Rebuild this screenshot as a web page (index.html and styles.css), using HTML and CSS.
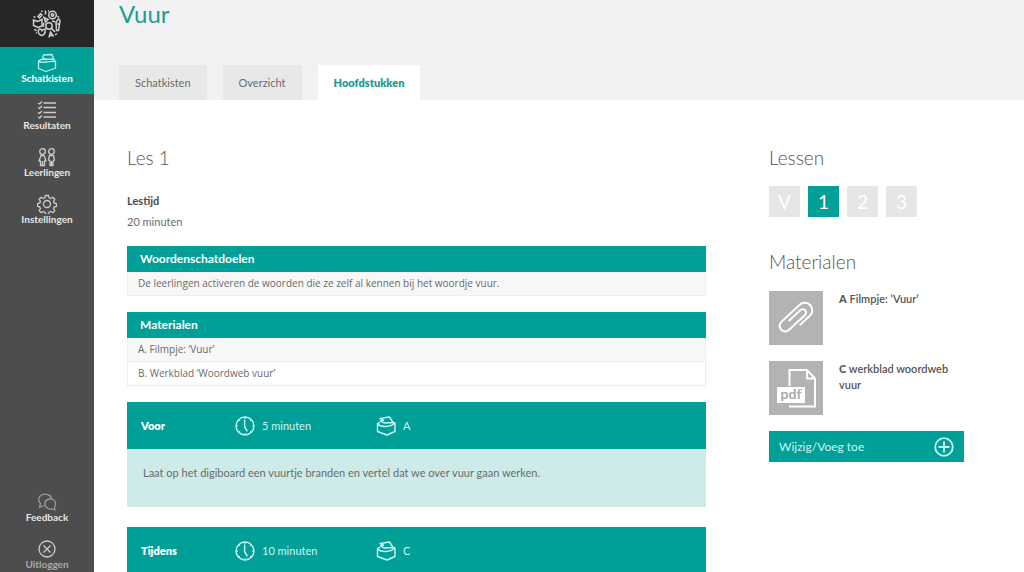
FILE: index.html
```html
<!DOCTYPE html>
<html lang="nl">
<head>
<meta charset="utf-8">
<meta name="viewport" content="width=device-width, initial-scale=1">
<title>Vuur - Hoofdstukken</title>
<link rel="stylesheet" href="styles.css">
</head>
<body>
<svg class="symbols" aria-hidden="true">
  <symbol id="chest" viewBox="0 0 20 20">
    <path d="M1 8 4 6.200M17 6.500 19 7V15.500L11 19 1.500 15.500V8C5 11.500 14 11.500 19 7M4 2.500 13.500 1 17 6.500 8 7 4.500 5 7.500 4.200Z"/>
  </symbol>
  <symbol id="clock" viewBox="0 0 20 20">
    <circle cx="10" cy="10" r="9"/>
    <path d="M9.600 3.600V10.600L12.400 15.400"/>
    <path class="ticks" d="M10 1v2M10 17v2M1 10h2M17 10h2M3.600 3.600 5 5M15 15l1.400 1.400M3.600 16.400 5 15M15 5l1.400-1.400"/>
  </symbol>
</svg>
<div class="app">
  <aside class="sidebar">
    <a class="logo" href="#" aria-label="Start">
      <svg viewBox="0 0 30 30">
        <path d="M1.500 11 5.500 12.500 10 10.500V17L6 18.500 1.500 16.500ZM6.500 21c1.500-2 3-.500 3.500.600 1-1.600 3.600-1.400 3.200 1 0 2-2 3.500-3.600 4-2-.8-4-3-3.100-5.600ZM25.500 11c.5-1.500 2.500-1 2.500 1l-1.500 9.500h-2L24 14Z"/>
        <circle cx="20.500" cy="6" r="3.800"/><circle cx="20.500" cy="6" r="1.200"/>
        <circle cx="17" cy="17" r="3.200"/>
        <path d="M19.400 19.400 23 23M6 7.500 8.500 4.500 10 6 7.500 9ZM13.500 1.500V5.500M12 8.500l4 2-2.500 2.500ZM17 28.500l1.500-5.500 3 4.500M17 26.500h4M12 14l-1 4M20 12l3.500 1M2.500 20l2 2M23 26l2-1.500M10.500 1.800l-1 1M25.500 7l1.500 1.500M13.500 19v1.500M1.500 8h2M25 15h3M16 2h1M4 24h1"/>
      </svg>
    </a>
    <nav class="menu" aria-label="Hoofdmenu">
      <a class="menu-item active" href="#"><svg class="icon" viewBox="0 0 20 20"><path d="M1.500 8 4 6.500 16.500 6 18.500 8.500V15L9 18.500 1.500 15.500ZM1.500 8C5 11.500 10 7.500 18.500 8.500M5.500 4.500 6.500 2 15 1.500 16.500 6M5.500 4.500 9 6.500"/></svg>Schatkisten</a>
      <a class="menu-item" href="#"><svg class="icon" viewBox="0 0 20 20"><path d="M6.500 3H19M6.500 7.500H19M6.500 12.500H19M6.500 17H19M1 3l1.500 1L5 1.500M1 7.500l1.500 1L5 6M1 12.500l1.500 1L5 11M1 17l1.500 1L5 15.500"/></svg>Resultaten</a>
      <a class="menu-item" href="#"><svg class="icon" viewBox="0 0 20 20"><circle cx="5.500" cy="4.500" r="2.800"/><circle cx="14.500" cy="4.500" r="2.800"/><path d="M4 8.500H7L9 14H7.500V18.500H3.500V14H2ZM5.500 14v4.500M12.500 8.500H16.500L17.500 13 16 14V18.500H13V14L11.500 13ZM14.500 14v4.500"/></svg>Leerlingen</a>
      <a class="menu-item" href="#"><svg class="icon" viewBox="0 0 20 20"><circle cx="10" cy="10" r="3.500"/><path d="M8.500 1.500h3l.6 2.400 1.600.6 2.100-1.200 2 2-1.200 2.100.6 1.600 2.300.6v2.800l-2.300.6-.6 1.600 1.200 2.100-2 2-2.100-1.200-1.600.6-.6 2.200h-3l-.6-2.200-1.600-.6-2.100 1.200-2-2 1.200-2.100-.6-1.600-2.300-.6V9.600L2.800 9l.6-1.600-1.200-2.100 2-2 2.100 1.200 1.600-.6Z"/></svg>Instellingen</a>
    </nav>
    <nav class="menu menu-bottom" aria-label="Account">
      <a class="menu-item soft" href="#"><svg class="icon" viewBox="0 0 20 20"><path d="M7 13.500 2.500 15.500 3.500 11.500C1 9 1 5 4.500 3 8.500.800 14 3 14.500 6.500M8 10.500C9 6.500 15.500 5.500 18 9.500c1 2 .5 4-.5 5.500l.5 3-3-1.200C11 18 7 14.500 8 10.500Z"/></svg>Feedback</a>
      <a class="menu-item dim" href="#"><svg class="icon" viewBox="0 0 20 20"><circle cx="10" cy="10" r="8"/><path d="M6.500 6.500 13.500 13.500M13.500 6.500 6.500 13.500"/></svg>Uitloggen</a>
    </nav>
  </aside>

  <div class="page">
    <header class="page-head">
      <h1>Vuur</h1>
      <nav class="tabs" aria-label="Onderdelen">
        <a class="tab" href="#">Schatkisten</a>
        <a class="tab" href="#">Overzicht</a>
        <a class="tab current" href="#" aria-current="page">Hoofdstukken</a>
      </nav>
    </header>

    <div class="content">
      <main class="lesson">
        <h2>Les 1</h2>
        <dl class="duration">
          <dt>Lestijd</dt>
          <dd>20 minuten</dd>
        </dl>
        <section class="panel">
          <h3>Woordenschatdoelen</h3>
          <ul><li>De leerlingen activeren de woorden die ze zelf al kennen bij het woordje vuur.</li></ul>
        </section>
        <section class="panel">
          <h3>Materialen</h3>
          <ul>
            <li>A. Filmpje: ‘Vuur’</li>
            <li>B. Werkblad ‘Woordweb vuur’</li>
          </ul>
        </section>
        <section class="phase">
          <header class="phase-head">
            <h3>Voor</h3>
            <span class="meta"><svg class="icon"><use href="#clock"/></svg>5 minuten</span>
            <span class="meta"><svg class="icon"><use href="#chest"/></svg>A</span>
          </header>
          <p>Laat op het digiboard een vuurtje branden en vertel dat we over vuur gaan werken.</p>
        </section>
        <section class="phase">
          <header class="phase-head">
            <h3>Tijdens</h3>
            <span class="meta"><svg class="icon"><use href="#clock"/></svg>10 minuten</span>
            <span class="meta"><svg class="icon"><use href="#chest"/></svg>C</span>
          </header>
        </section>
      </main>

      <aside class="extras">
        <h2>Lessen</h2>
        <nav class="lessons" aria-label="Lessen">
          <a href="#">V</a>
          <a class="current" href="#" aria-current="page">1</a>
          <a href="#">2</a>
          <a href="#">3</a>
        </nav>
        <h2>Materialen</h2>
        <ul class="files">
          <li>
            <a href="#">
              <svg class="thumb" viewBox="0 0 54 54"><path transform="translate(27 27.500) rotate(-43)" d="M-2 7.500H12a7.500 7.500 0 0 0 0-15H-13a5.500 5.500 0 0 0 0 11H9a3.300 3.300 0 0 0 0-6.600H-7"/></svg>
              <span><b>A</b> Filmpje: ‘Vuur’</span>
            </a>
          </li>
          <li>
            <a href="#">
              <svg class="thumb" viewBox="0 0 54 54"><path d="M20.500 25V9H38L46 17.500V45.500H20M38 9v8.500h8"/><rect x="8" y="26" width="28" height="16"/><text x="22" y="38">pdf</text></svg>
              <span><b>C</b> werkblad woordweb vuur</span>
            </a>
          </li>
        </ul>
        <button class="add" type="button">Wijzig/Voeg toe
          <svg class="icon" viewBox="0 0 20 20"><circle cx="10" cy="10" r="8.800"/><path d="M10 4.500v11M4.500 10h11"/></svg>
        </button>
      </aside>
    </div>
  </div>
</div>
</body>
</html>
```
FILE: styles.css
```css
* { box-sizing: border-box; }
body {
  margin: 0;
  background: #fff;
  color: #6b6b6b;
  font: 11px/16px Lato, "Open Sans", sans-serif;
}
h1, h2, h3, p, ul, dl, dd { margin: 0; padding: 0; }
ul { list-style: none; }
a { color: inherit; text-decoration: none; }
.symbols { position: absolute; width: 0; height: 0; }
.icon {
  width: 20px;
  height: 20px;
  flex: none;
  fill: none;
  stroke: currentColor;
  stroke-width: 1.4;
  stroke-linejoin: round;
}
.app { display: flex; height: 100vh; overflow: hidden; }

.sidebar {
  flex: none;
  display: flex;
  flex-direction: column;
  width: 94px;
  background: #4d4d4d;
  color: #e6e6e6;
}
.logo {
  display: grid;
  place-items: center;
  height: 47px;
  background: #262626;
}
.logo svg {
  width: 30px;
  height: 30px;
  fill: none;
  stroke: #d0d0d0;
  stroke-width: 1.5;
}
.menu-item {
  display: flex;
  flex-direction: column;
  align-items: center;
  height: 47px;
  padding-top: 6px;
  font-size: 10px;
  line-height: 11px;
  font-weight: 700;
}
.menu-item .icon { stroke-width: 1.3; color: #ccc; }
.menu-item.active { background: #00a099; color: #fff; }
.menu-item.active .icon { color: #b8efea; }
.menu-bottom { margin-top: auto; height: 86px; }
.menu-item.soft .icon { color: #999; }
.menu-item.dim { color: #aaa; }

.page { flex: 1; min-width: 0; }
.page-head { background: #f2f2f2; padding: 0 25px; }
h1 {
  height: 65px;
  color: #1a9e94;
  font-size: 24px;
  line-height: 28px;
  font-weight: 400;
}
.tabs { display: flex; gap: 16px; }
.tab {
  padding: 0 16px;
  background: #e8e8e8;
  line-height: 35px;
}
.tab.current { background: #fff; color: #1a9e94; font-weight: 800; }

.content {
  display: flex;
  gap: 63px;
  padding: 46px 60px 0 33px;
}
.lesson { flex: 1; min-width: 0; }
h2 { font-size: 19px; line-height: 24px; font-weight: 300; color: #555; }
.duration { margin: 20px 0 14px; line-height: 21px; }
.duration dt { color: #4d4d4d; font-weight: 700; }
.panel { margin-bottom: 16px; }
.panel h3 {
  padding: 0 13px;
  background: #00a099;
  color: #fff;
  font-size: 12px;
  line-height: 26px;
  font-weight: 700;
}
.panel ul { border: solid #eee; border-width: 0 1px; }
.panel li {
  height: 24px;
  padding: 0 10px;
  border-bottom: 1px solid #eee;
  font-family: "Open Sans", Lato, sans-serif;
  font-size: 10px;
  line-height: 23px;
}
.panel li:nth-child(odd) { background: #f7f7f7; }
.phase { margin-bottom: 20px; }
.phase-head {
  display: grid;
  grid-template-columns: 94px 141px 1fr;
  align-items: center;
  height: 47px;
  padding: 0 14px;
  background: #00a099;
  color: #d0f5f2;
}
.phase-head h3 { color: #fff; font-size: 11px; font-weight: 800; }
.meta { display: flex; align-items: center; gap: 7px; }
.ticks { stroke-width: 1; }
.phase p { min-height: 58px; padding: 16px; background: #ccebe9; }

.extras { flex: none; width: 195px; }
.lessons { display: flex; gap: 8px; margin: 16px 0 33px; }
.lessons a {
  width: 31px;
  background: #e6e6e6;
  color: #fff;
  font-size: 19px;
  line-height: 31px;
  text-align: center;
}
.lessons .current { background: #00a099; }
.files { display: grid; gap: 16px; margin: 17px 0 16px; }
.files a { display: flex; gap: 16px; color: #555; font-weight: 600; }
.files b { font-weight: 900; }
.thumb {
  flex: none;
  width: 54px;
  height: 54px;
  background: #b3b3b3;
  fill: none;
  stroke: #fff;
  stroke-width: 2;
}
.thumb rect { fill: #fff; stroke: none; }
.thumb text { fill: #aaa; stroke: none; font-size: 14px; font-weight: 700; text-anchor: middle; }
.add {
  display: flex;
  align-items: center;
  justify-content: space-between;
  width: 100%;
  height: 31px;
  padding: 0 10px;
  border: 0;
  background: #00a099;
  color: #d0f5f2;
  font: inherit;
  font-size: 12px;
}
.add .icon { stroke-width: 1.8; }
```
